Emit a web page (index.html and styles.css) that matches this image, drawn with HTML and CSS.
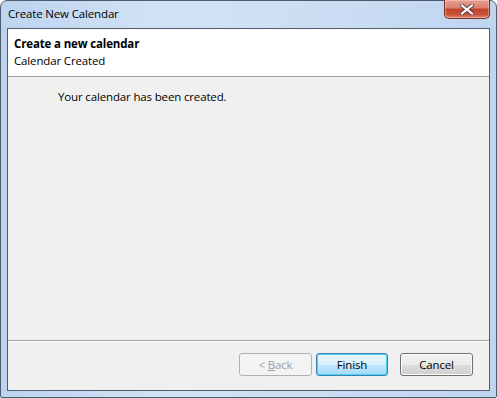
FILE: index.html
```html
<!DOCTYPE html>
<html lang="en">
<head>
    <meta charset="UTF-8">
    <title>Create New Calendar</title>
    <link rel="stylesheet" href="styles.css">
</head>
<body>
    <div class="window">
        <div class="titlebar">
            <span class="title">Create New Calendar</span>
            <button class="close-btn" aria-label="Close">
                <svg width="14" height="11" viewBox="0 0 14 11">
                    <path d="M2 1.5 L12 9.5 M12 1.5 L2 9.5" stroke="#5a3a3a" stroke-width="4" stroke-linecap="square"/>
                    <path d="M2 1.5 L12 9.5 M12 1.5 L2 9.5" stroke="#ffffff" stroke-width="2.2" stroke-linecap="square"/>
                </svg>
            </button>
        </div>

        <div class="client">
            <header class="wizard-header">
                <h1>Create a new calendar</h1>
                <p>Calendar Created</p>
            </header>

            <main class="wizard-body">
                <p>Your calendar has been created.</p>
            </main>

            <footer class="wizard-footer">
                <button class="btn" disabled>&lt; <u>B</u>ack</button>
                <button class="btn btn-default">Finish</button>
                <button class="btn btn-cancel">Cancel</button>
            </footer>
        </div>
    </div>
</body>
</html>
```

FILE: styles.css
```css
* {
    margin: 0;
    padding: 0;
    box-sizing: border-box;
    font-family: "Open Sans", "Noto Sans", sans-serif;
}

body {
    width: 497px;
    height: 398px;
    overflow: hidden;
    background: #ffffff;
}

.window {
    width: 497px;
    height: 398px;
    display: flex;
    flex-direction: column;
    border: 1px solid #4e5b6b;
    border-radius: 7px 7px 2px 2px;
    background: linear-gradient(to right, #bcd4ef 0%, #d3e3f6 35%, #c9dcf3 70%, #bfd5ef 100%);
    padding: 0 6px 6px;
}

/* Title bar */
.titlebar {
    height: 27px;
    display: flex;
    align-items: flex-start;
    justify-content: space-between;
}

.title {
    font-size: 11.5px;
    letter-spacing: -0.15px;
    color: #000000;
    padding: 5px 0 0 1px;
}

.close-btn {
    width: 46px;
    height: 19px;
    margin-top: -1px;
    border: 1px solid #7a2a22;
    border-top: none;
    border-radius: 0 0 5px 5px;
    background: linear-gradient(to bottom, #e7a193 0%, #d9806e 45%, #c0432e 50%, #c9523a 80%, #dc8a6e 100%);
    box-shadow: inset 0 0 0 1px rgba(255, 220, 210, 0.45);
    display: flex;
    align-items: center;
    justify-content: center;
}

/* Client area */
.client {
    flex: 1;
    display: flex;
    flex-direction: column;
    border: 1px solid #4f5d6e;
    background: #f0f0f0;
}

.wizard-header {
    height: 48px;
    background: #ffffff;
    border-bottom: 1px solid #a0a0a0;
    padding: 6px 0 0 6px;
    font-size: 11.5px;
    letter-spacing: -0.15px;
    color: #000000;
}

.wizard-header h1 {
    font-size: 11.5px;
    font-weight: bold;
    line-height: 17px;
}

.wizard-header p {
    line-height: 17px;
}

.wizard-body {
    flex: 1;
    padding: 12px 0 0 50px;
    font-size: 11.5px;
    letter-spacing: -0.15px;
    color: #000000;
    border-bottom: 1px solid #a0a0a0;
}

.wizard-footer {
    height: 49px;
    display: flex;
    justify-content: flex-end;
    align-items: flex-start;
    padding: 11px 16px 0 0;
    border-top: 1px solid #ffffff;
}

.btn {
    width: 73px;
    height: 23px;
    font-size: 11.5px;
    letter-spacing: -0.15px;
    color: #000000;
    border: 1px solid #707070;
    border-radius: 3px;
    background: linear-gradient(to bottom, #f2f2f2 0%, #ebebeb 50%, #dddddd 51%, #cfcfcf 100%);
    box-shadow: inset 0 0 0 1px #fcfcfc;
}

.btn:disabled {
    color: #a0a0a0;
    border-color: #adb2b5;
    background: #f4f4f4;
    box-shadow: none;
}

.btn-default {
    margin-left: 4px;
    width: 72px;
    border-color: #3c7fb1;
    box-shadow: inset 0 0 0 1px #48d4f5;
    background: linear-gradient(to bottom, #eaf6fd 0%, #d9f0fc 50%, #bee6fd 51%, #a7d9f5 100%);
}

.btn-cancel {
    margin-left: 12px;
}
```
